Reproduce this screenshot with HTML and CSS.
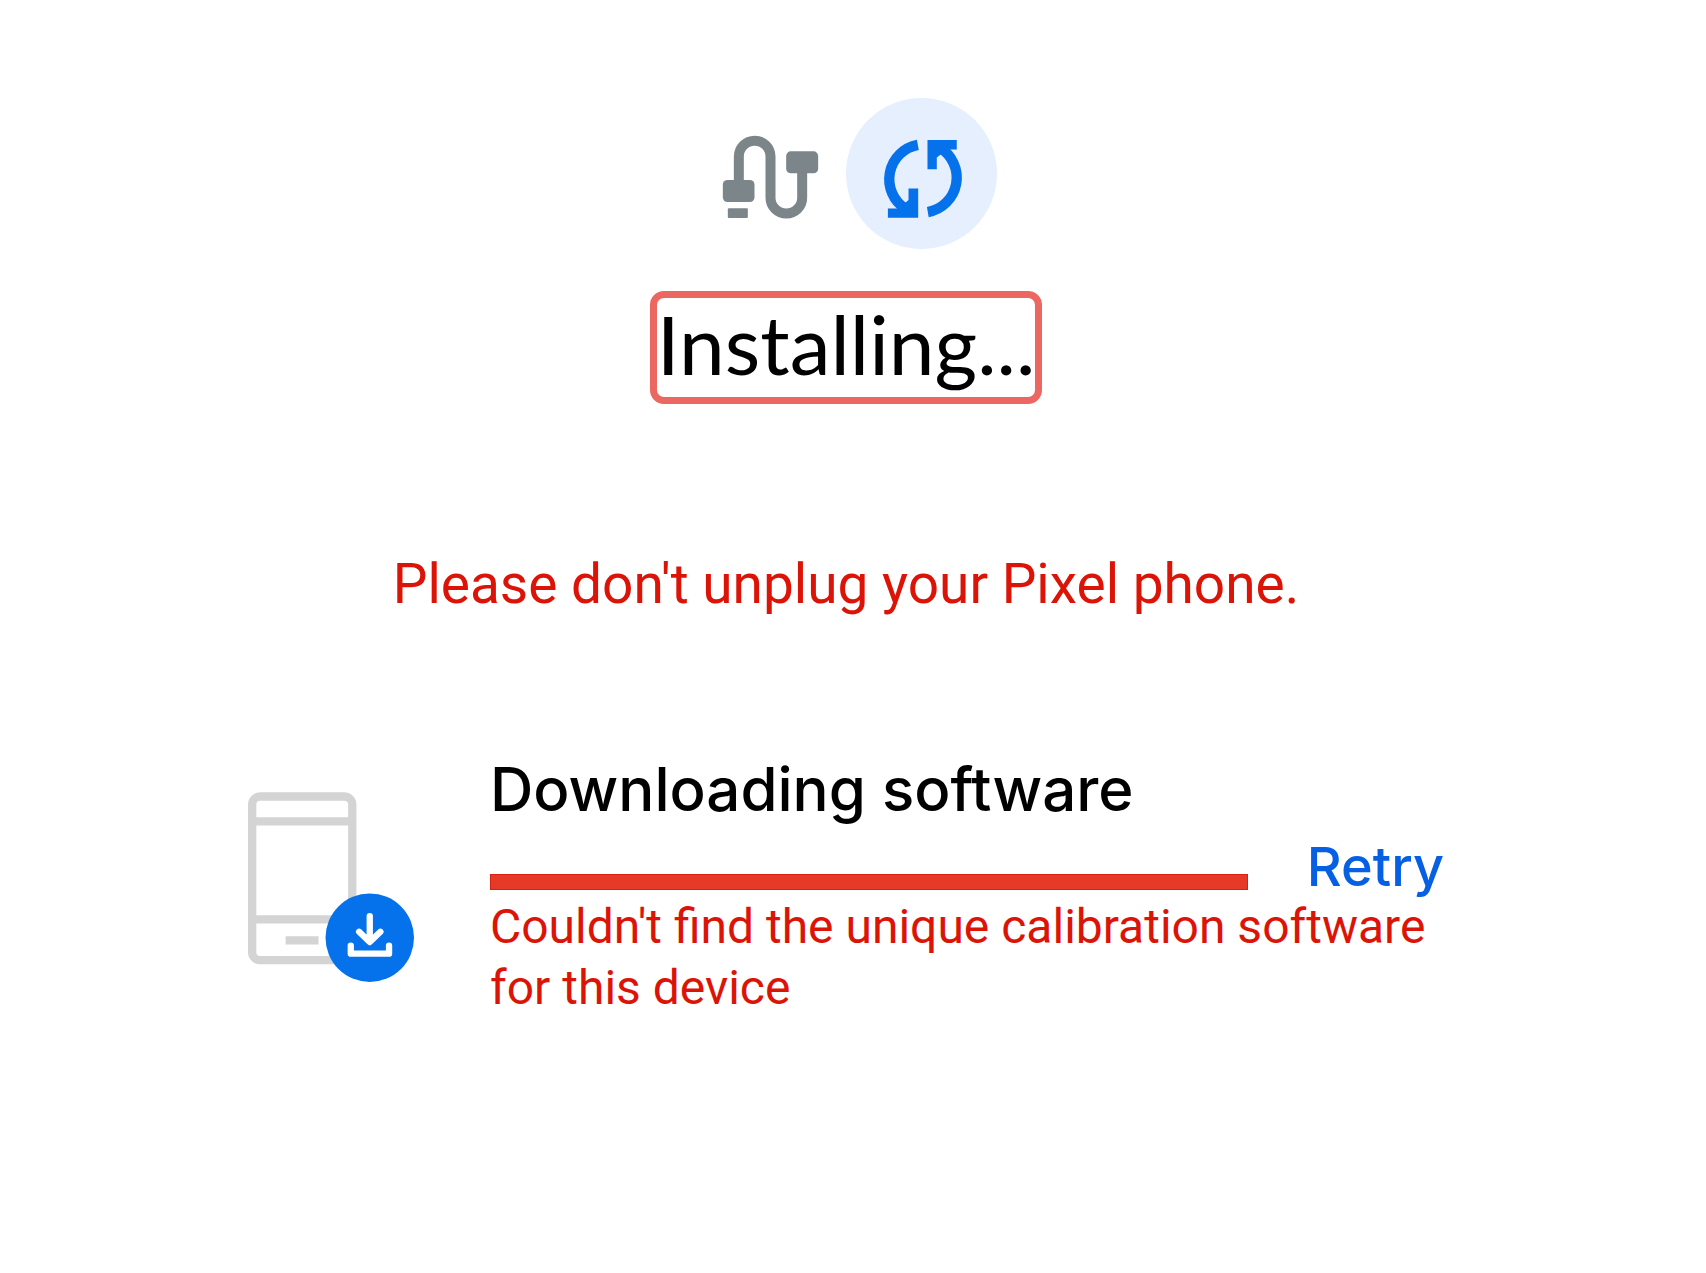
FILE: index.html
```html
<!DOCTYPE html>
<html lang="en">
<head>
<meta charset="utf-8">
<meta name="viewport" content="width=device-width, initial-scale=1">
<title>Installing</title>
<link rel="stylesheet" href="styles.css">
</head>
<body>
<main class="page">
  <div class="steps">
    <div class="step">
      <svg class="cable-icon" viewBox="68 165 290 252" aria-hidden="true">
        <path d="M118 310V229.500a47.500 47.500 0 0 1 95 0V353a47.500 47.500 0 0 0 95 0V270" fill="none" stroke="#7c868a" stroke-width="30"/>
        <g fill="#7c868a">
          <rect x="70" y="300" width="95" height="66" rx="14"/>
          <rect x="85" y="385" width="60" height="29" rx="3"/>
          <rect x="260" y="214" width="96" height="66" rx="14"/>
        </g>
      </svg>
    </div>
    <div class="step step-active">
      <svg class="sync-icon" viewBox="437 53 454 454" aria-hidden="true">
        <g fill="none" stroke="#0571ea" stroke-width="31">
          <path d="M653 194A105 105 0 0 0 616 386"/>
          <path d="M718 202A105 105 0 0 1 683 396"/>
        </g>
        <path fill="#0571ea" d="M654 325V413H563V385H595L625 360V325ZM682 267V179H770V208H742L710 232V267Z"/>
      </svg>
    </div>
  </div>
  <h1 class="title">Installing...</h1>
  <p class="message">Please don't unplug your Pixel phone.</p>
  <section class="task">
    <svg class="phone-icon" viewBox="50 62 502 571" aria-hidden="true">
      <g fill="none" stroke="#d4d4d4" stroke-width="25">
        <rect x="62.500" y="75.500" width="301" height="492" rx="24"/>
        <path d="M62 150H364M62 445H364M163 508H262"/>
      </g>
      <circle cx="416" cy="500" r="133" fill="#0571ea"/>
      <g fill="none" stroke="#fff" stroke-width="19" stroke-linecap="round" stroke-linejoin="round">
        <path d="M416 435V510M384 482L416 513L448 482M359 524V548H474V524"/>
      </g>
    </svg>
    <h2 class="task-title" id="task-title">Downloading software</h2>
    <progress class="task-bar" value="100" max="100" aria-labelledby="task-title"></progress>
    <button class="retry" type="button">Retry</button>
    <p class="error">Couldn't find the unique calibration software for this device</p>
  </section>
</main>
</body>
</html>
```
FILE: styles.css
```css
* {
  box-sizing: border-box;
}

body {
  margin: 0;
  background: #fff;
  color: #000;
  font-family: Roboto, "Liberation Sans", sans-serif;
}

.page {
  display: flex;
  flex-direction: column;
  align-items: center;
  padding: 98px 14px 48px 0;
}

.steps {
  display: flex;
}

.step {
  display: flex;
  align-items: center;
  justify-content: center;
  width: 151px;
  height: 151px;
  border-radius: 50%;
}

.step-active {
  background: #e5effe;
}

.cable-icon {
  width: 97px;
  height: 84px;
  margin-top: 6px;
}

.sync-icon {
  width: 151px;
  height: 151px;
}

.title {
  margin: 42px 0 0;
  padding-bottom: 8px;
  border: 7px solid #ed6762;
  border-radius: 14px;
  font: 400 82px/91px Lato, sans-serif;
}

.message {
  margin: 148px 0 0;
  color: #dc1408;
  font-size: 55px;
  line-height: 64px;
}

.task {
  display: grid;
  grid-template-columns: 183px minmax(0, 1fr) auto;
  column-gap: 59px;
  width: 100%;
  max-width: 1196px;
  margin-top: 140px;
}

.phone-icon {
  grid-row: 1 / 4;
  align-self: center;
  width: 167px;
  height: 190px;
}

.task-title {
  grid-column: 2 / 4;
  margin: 0;
  font: 500 60px/66px Inter, sans-serif;
}

.task-bar {
  align-self: end;
  width: 100%;
  height: 16px;
  appearance: none;
  border: 0;
  background: #e53a28;
}

.task-bar::-webkit-progress-bar {
  background: #f6c7c2;
}

.task-bar::-webkit-progress-value {
  border: 1px solid #d8200f;
  background: #e53a28;
}

.retry {
  margin: 22px 0 0;
  padding: 0;
  border: 0;
  background: none;
  color: #0560e3;
  font: 500 54px/46px Inter, sans-serif;
  cursor: pointer;
}

.error {
  grid-column: 2 / 4;
  margin: 6px 0 0;
  color: #dc1408;
  font-size: 48px;
  line-height: 61px;
}
```
